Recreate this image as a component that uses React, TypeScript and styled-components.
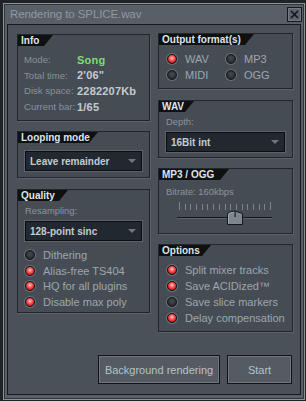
import React from 'react';
import styled, { createGlobalStyle, css } from 'styled-components';

const GlobalStyle = createGlobalStyle`
    html, body {
        margin: 0;
        padding: 0;
        background: #202327;
    }
    * {
        box-sizing: border-box;
    }
`;

const Screen = styled.div`
    width: 306px;
    height: 401px;
    padding: 3px 0 0 3px;
    background: #202327;
    font-family: 'Liberation Sans', Arial, sans-serif;
    overflow: hidden;
`;

const Window = styled.div`
    width: 302px;
    height: 397px;
    border: 1px solid #8a9197;
    box-shadow: inset 0 0 0 1px #30353a;
    background: #585f66;
    display: flex;
    flex-direction: column;
`;

const TitleBar = styled.div`
    height: 20px;
    display: flex;
    align-items: center;
    justify-content: space-between;
    padding: 0 2px 0 6px;
`;

const Title = styled.div`
    font-size: 11.5px;
    color: #8f999f;
    letter-spacing: -0.1px;
`;

const CloseButton = styled.div`
    width: 15px;
    height: 15px;
    border: 1px solid #16191c;
    background: #5d646b;
    box-shadow: inset 0 0 0 1px #737a81;
    display: flex;
    align-items: center;
    justify-content: center;
`;

const Body = styled.div`
    margin: 0 3px 0 3px;
    height: 371px;
    border: 1px solid #16191c;
    background: #4b5158;
    padding: 8px 7px 0 9px;
    display: flex;
    flex-direction: column;
`;

const Columns = styled.div`
    height: 299px;
    display: flex;
    gap: 8px;
    align-items: flex-start;
`;

const Column = styled.div<{ $w: number; $top?: number }>`
    width: ${p => p.$w}px;
    margin-top: ${p => p.$top || 0}px;
    display: flex;
    flex-direction: column;
`;

const Panel = styled.div<{ $h: number; $gap?: number }>`
    height: ${p => p.$h}px;
    margin-bottom: ${p => p.$gap || 0}px;
    border: 1px solid #22262a;
    background: #464c53;
    box-shadow: 1px 1px 0 #5a6168;
    display: flex;
    flex-direction: column;
`;

const Tab = styled.div<{ $w: number }>`
    width: ${p => p.$w}px;
    height: 11px;
    line-height: 11px;
    padding-left: 3px;
    background: #0e1012;
    color: #dde5ea;
    font-size: 10px;
    font-weight: bold;
    clip-path: polygon(0 0, 100% 0, calc(100% - 9px) 100%, 0 100%);
`;

const PanelBody = styled.div<{ $pt: number; $px?: number }>`
    padding: ${p => p.$pt}px ${p => p.$px ?? 7}px 0 ${p => p.$px ?? 7}px;
    display: flex;
    flex-direction: column;
`;

const InfoRow = styled.div`
    height: 15.6px;
    display: flex;
    align-items: center;
    padding-left: 6px;
`;

const InfoLabel = styled.span`
    width: 53px;
    font-size: 9.6px;
    color: #87919a;
    white-space: nowrap;
`;

const InfoValue = styled.span<{ $green?: boolean }>`
    font-size: 11px;
    font-weight: bold;
    color: ${p => (p.$green ? '#7bdc76' : '#c3cbd1')};
    letter-spacing: 0.2px;
`;

const SubLabel = styled.div`
    height: 14px;
    line-height: 14px;
    font-size: 9.4px;
    color: #8a949c;
`;

const Dropdown = styled.div<{ $mt?: number }>`
    margin-top: ${p => p.$mt ?? 3}px;
    height: 20px;
    border: 1px solid #0b0d0f;
    box-shadow: 0 0 0 1px #5b6269;
    background: #212830;
    display: flex;
    align-items: center;
    justify-content: space-between;
    padding: 0 5px 0 4px;
    font-size: 10px;
    font-weight: bold;
    color: #c2cbd1;
`;

const Arrow = styled.span`
    width: 0;
    height: 0;
    border-left: 4px solid transparent;
    border-right: 4px solid transparent;
    border-top: 4px solid #6f777e;
`;

const RadioGrid = styled.div<{ $cols?: number; $mt?: number }>`
    margin-top: ${p => p.$mt || 0}px;
    display: grid;
    grid-template-columns: ${p => (p.$cols === 2 ? '59px 59px' : '1fr')};
`;

const RadioRow = styled.div<{ $h?: number }>`
    height: ${p => p.$h ?? 16}px;
    display: flex;
    align-items: center;
    gap: 8px;
    font-size: 11px;
    color: #9da7af;
    white-space: nowrap;
`;

const Led = styled.span<{ $on?: boolean }>`
    flex: none;
    width: 10px;
    height: 10px;
    border-radius: 50%;
    border: 1px solid #15181b;
    box-shadow: 0 0 0 1px #6a7178;
    ${p =>
        p.$on
            ? css`
                  background: radial-gradient(circle at 50% 40%, #ffd0d0 0, #ff6a6a 30%, #d42424 65%, #8a1010 100%);
              `
            : css`
                  background: radial-gradient(circle at 50% 40%, #474d53 0, #2c3135 60%, #1d2124 100%);
              `}
`;

const SliderWrap = styled.div`
    margin: 1px 0 0 9px;
    height: 26px;
`;

const Footer = styled.div`
    margin-top: 23px;
    display: flex;
    justify-content: flex-end;
    gap: 7px;
    padding-right: 1px;
`;

const Button = styled.div<{ $w: number }>`
    width: ${p => p.$w}px;
    height: 29px;
    border: 1px solid #121417;
    background: #545b62;
    box-shadow: inset 0 0 0 1px #6e757c;
    display: flex;
    align-items: center;
    justify-content: center;
    font-size: 11px;
    color: #b5c1c9;
`;

const Slider = () => {
    const ticks = Array.from({ length: 17 }, (_, i) => 4 + i * 5.69);
    return (
        <svg width="100" height="26" viewBox="0 0 100 26">
            {ticks.map((x, i) => (
                <rect
                    key={i}
                    x={Math.round(x)}
                    y={i === 0 || i === 16 ? 2 : 4}
                    width="1"
                    height={i === 0 || i === 16 ? 8 : 6}
                    fill="#7c848b"
                />
            ))}
            <rect x="2" y="17" width="95" height="1" fill="#15181b" />
            <rect x="2" y="18" width="95" height="1" fill="#5d646b" />
            <path d="M52.5 24.5 V15 Q52.5 12.5 55 12 L60 11 L67.5 13.5 V24.5 Z" fill="#7f878e" stroke="#15181b" />
            <path d="M53.5 23.5 V15.2 Q53.5 13.3 55.3 13 L60 12.1" fill="none" stroke="#a3abb2" />
            <rect x="59.5" y="11" width="1.2" height="6" fill="#1b1e21" />
        </svg>
    );
};

const App = () => {
    return (
        <>
            <GlobalStyle />
            <Screen>
                <Window>
                    <TitleBar>
                        <Title>Rendering to SPLICE.wav</Title>
                        <CloseButton>
                            <svg width="9" height="9" viewBox="0 0 9 9">
                                <path d="M1 1 L8 8 M8 1 L1 8" stroke="#121417" strokeWidth="1.6" />
                            </svg>
                        </CloseButton>
                    </TitleBar>
                    <Body>
                        <Columns>
                            <Column $w={133} $top={1}>
                                <Panel $h={87} $gap={10}>
                                    <Tab $w={35}>Info</Tab>
                                    <PanelBody $pt={6} $px={0}>
                                        <InfoRow>
                                            <InfoLabel>Mode:</InfoLabel>
                                            <InfoValue $green>Song</InfoValue>
                                        </InfoRow>
                                        <InfoRow>
                                            <InfoLabel>Total time:</InfoLabel>
                                            <InfoValue>2'06"</InfoValue>
                                        </InfoRow>
                                        <InfoRow>
                                            <InfoLabel>Disk space:</InfoLabel>
                                            <InfoValue>2282207Kb</InfoValue>
                                        </InfoRow>
                                        <InfoRow>
                                            <InfoLabel>Current bar:</InfoLabel>
                                            <InfoValue>1/65</InfoValue>
                                        </InfoRow>
                                    </PanelBody>
                                </Panel>
                                <Panel $h={47} $gap={11}>
                                    <Tab $w={80}>Looping mode</Tab>
                                    <PanelBody $pt={5}>
                                        <Dropdown $mt={3}>
                                            Leave remainder
                                            <Arrow />
                                        </Dropdown>
                                    </PanelBody>
                                </Panel>
                                <Panel $h={124}>
                                    <Tab $w={50}>Quality</Tab>
                                    <PanelBody $pt={3}>
                                        <SubLabel>Resampling:</SubLabel>
                                        <Dropdown>
                                            128-point sinc
                                            <Arrow />
                                        </Dropdown>
                                        <RadioGrid $mt={6}>
                                            <RadioRow $h={15.7}>
                                                <Led />
                                                Dithering
                                            </RadioRow>
                                            <RadioRow $h={15.7}>
                                                <Led $on />
                                                Alias-free TS404
                                            </RadioRow>
                                            <RadioRow $h={15.7}>
                                                <Led $on />
                                                HQ for all plugins
                                            </RadioRow>
                                            <RadioRow $h={15.7}>
                                                <Led $on />
                                                Disable max poly
                                            </RadioRow>
                                        </RadioGrid>
                                    </PanelBody>
                                </Panel>
                            </Column>
                            <Column $w={135}>
                                <Panel $h={56} $gap={11}>
                                    <Tab $w={95}>Output format(s)</Tab>
                                    <PanelBody $pt={6} $px={8}>
                                        <RadioGrid $cols={2}>
                                            <RadioRow>
                                                <Led $on />
                                                WAV
                                            </RadioRow>
                                            <RadioRow>
                                                <Led />
                                                MP3
                                            </RadioRow>
                                            <RadioRow>
                                                <Led />
                                                MIDI
                                            </RadioRow>
                                            <RadioRow>
                                                <Led />
                                                OGG
                                            </RadioRow>
                                        </RadioGrid>
                                    </PanelBody>
                                </Panel>
                                <Panel $h={58} $gap={10}>
                                    <Tab $w={35}>WAV</Tab>
                                    <PanelBody $pt={3}>
                                        <SubLabel>Depth:</SubLabel>
                                        <Dropdown>
                                            16Bit int
                                            <Arrow />
                                        </Dropdown>
                                    </PanelBody>
                                </Panel>
                                <Panel $h={66} $gap={10}>
                                    <Tab $w={70}>MP3 / OGG</Tab>
                                    <PanelBody $pt={5}>
                                        <SubLabel>Bitrate: 160kbps</SubLabel>
                                        <SliderWrap>
                                            <Slider />
                                        </SliderWrap>
                                    </PanelBody>
                                </Panel>
                                <Panel $h={88}>
                                    <Tab $w={52}>Options</Tab>
                                    <PanelBody $pt={6} $px={8}>
                                        <RadioGrid>
                                            <RadioRow>
                                                <Led $on />
                                                Split mixer tracks
                                            </RadioRow>
                                            <RadioRow>
                                                <Led $on />
                                                Save ACIDized™
                                            </RadioRow>
                                            <RadioRow>
                                                <Led />
                                                Save slice markers
                                            </RadioRow>
                                            <RadioRow>
                                                <Led $on />
                                                Delay compensation
                                            </RadioRow>
                                        </RadioGrid>
                                    </PanelBody>
                                </Panel>
                            </Column>
                        </Columns>
                        <Footer>
                            <Button $w={122}>Background rendering</Button>
                            <Button $w={65}>Start</Button>
                        </Footer>
                    </Body>
                </Window>
            </Screen>
        </>
    );
};

export default App;
